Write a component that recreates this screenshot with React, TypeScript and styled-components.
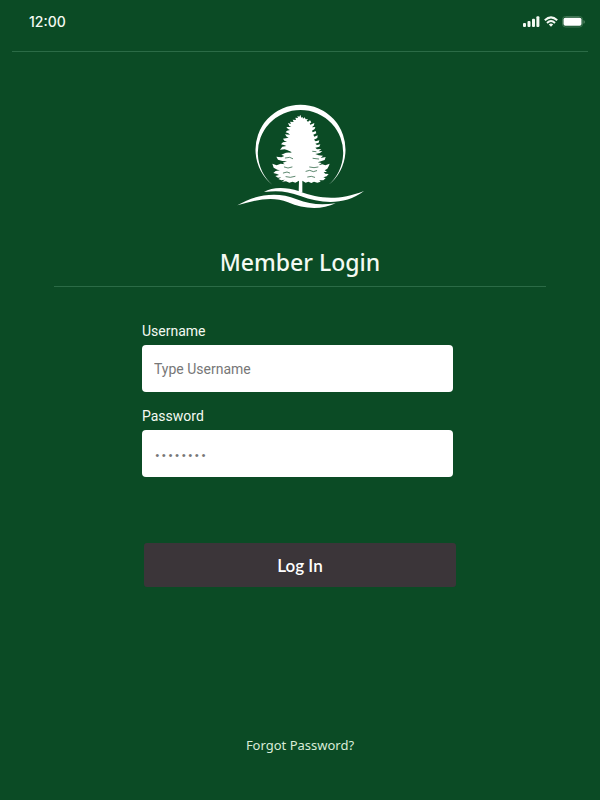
import React from "react";
import styled, { createGlobalStyle } from "styled-components";

const GlobalStyle = createGlobalStyle`
  *, *::before, *::after { box-sizing: border-box; }
  body { margin: 0; background: #0b4b25; }
`;

const Screen = styled.div`
  min-height: 100vh;
  display: flex;
  flex-direction: column;
  align-items: center;
  background: #0b4b25;
  color: #f4faf3;
  font-family: Roboto, "Liberation Sans", sans-serif;
`;

const StatusBar = styled.header`
  align-self: stretch;
  display: flex;
  align-items: center;
  justify-content: space-between;
  height: 52px;
  margin: 0 12px;
  padding: 0 3px 8px 17px;
  border-bottom: 1px solid #2b6b46;
`;

const Clock = styled.time`
  font-family: Inter, sans-serif;
  font-size: 14px;
  line-height: 20px;
  font-weight: 500;
`;

const StatusIcons = styled.div`
  display: flex;
  align-items: center;
  gap: 4px;

  svg { display: block; }
`;

const Logo = styled.svg`
  display: block;
  width: 140px;
  height: 120px;
  margin-top: 43px;
`;

const Title = styled.h1`
  width: 82%;
  margin: 31px 0 0;
  padding-bottom: 8px;
  border-bottom: 1px solid #2b6b46;
  font-family: "Noto Sans", sans-serif;
  font-size: 23px;
  line-height: 32px;
  font-weight: 500;
  text-align: center;
`;

const Form = styled.form`
  width: 52%;
  margin-top: 34px;
  display: flex;
  flex-direction: column;
`;

const Fields = styled.div`
  display: flex;
  flex-direction: column;
  gap: 14px;
  margin: 0 3px 0 -2px;
`;

const Field = styled.div`
  display: flex;
  flex-direction: column;
  gap: 4px;
`;

const Label = styled.label`
  font-size: 14px;
  line-height: 20px;
`;

const TextInput = styled.input`
  width: 100%;
  height: 47px;
  padding: 0 12px;
  border: 0;
  border-radius: 4px;
  background: #fff;
  color: #333;
  font-family: inherit;
  font-size: 14px;

  &::placeholder { color: #777; opacity: 1; }
`;

const PasswordInput = styled(TextInput)`
  &::placeholder { font-family: "Liberation Mono", monospace; font-size: 11px; }
`;

const LoginButton = styled.button`
  height: 44px;
  margin-top: 66px;
  border: 0;
  border-radius: 3px;
  background: #3b3539;
  color: #fff;
  font-family: Lato, sans-serif;
  font-size: 17px;
  font-weight: 600;
  cursor: pointer;
`;

const ForgotLink = styled.a`
  margin-top: auto;
  margin-bottom: 45px;
  color: #d9ecd8;
  font-family: "Noto Sans", sans-serif;
  font-size: 13px;
  line-height: 20px;
  text-decoration: none;
`;

function SignalIcon() {
  return (
    <svg width="17" height="11" viewBox="0 0 17 11" fill="#f4faf3" aria-hidden="true">
      <rect x="0" y="7" width="3" height="4" rx="1" />
      <rect x="4.5" y="5" width="3" height="6" rx="1" />
      <rect x="9" y="2.8" width="3" height="8.2" rx="1" />
      <rect x="13.4" y="0.3" width="3" height="10.7" rx="1" />
    </svg>
  );
}

function WifiIcon() {
  return (
    <svg width="14" height="11" viewBox="0 0 14 11" fill="none" stroke="#f4faf3" strokeWidth="2" aria-hidden="true">
      <path d="M.8 4.3Q7-1.5 13.2 4.3M3 6.9Q7 3.2 11 6.9" />
      <path d="M4.8 8.4Q7 6.5 9.2 8.4L7 10.7Z" fill="#f4faf3" stroke="none" />
    </svg>
  );
}

function BatteryIcon() {
  return (
    <svg width="23" height="12" viewBox="0 0 23 12" aria-hidden="true">
      <rect x=".5" y=".5" width="20" height="10.5" rx="3" fill="none" stroke="#3f7553" />
      <rect x="1.5" y="1.8" width="18" height="8" rx="1.8" fill="#fff" />
      <path d="M21.5 4v3.8q1.3-.5 1.3-1.9T21.5 4Z" fill="#5c896b" />
    </svg>
  );
}

function TreeLogo() {
  return (
    <Logo viewBox="0 0 420 360" fill="#fff" role="img" aria-label="Pine tree emblem">
      <path d="M128 270A135 135 0 1 1 295 270A128 128 0 1 0 128 270Z" />
      <path
        d="M211 59L208 65L202 63L204 69L196 68L198 75L188 74L191 81L180 80L183 87L174 84L178 93L184 96L169 96L174 102L180 105L171 107L167 112L175 115L180 119L165 118L170 125L176 128L159 131L163 137L171 140L159 142L153 148L162 150L169 153L157 155L150 164L164 163L176 167L186 172L168 173L154 179L163 183L154 187L139 185L144 194L157 198L171 199L158 203L164 208L152 206L140 211L127 206L131 218L142 224L150 226L137 228L130 234L141 237L147 240L136 243L144 248L154 247L145 252L154 256L164 254L156 260L168 259L178 263L188 260L196 263L207 257L206 291L217 291L217 257L227 263L235 260L244 264L252 260L262 263L272 260L268 256L280 256L287 250L280 247L290 244L296 237L286 236L281 232L291 230L284 226L292 221L296 214L299 206L286 211L277 208L266 211L275 204L263 202L275 198L284 195L287 186L272 189L279 182L266 181L256 177L270 174L277 168L266 169L274 162L261 163L256 158L268 155L271 148L261 150L256 146L266 143L268 136L257 139L252 134L262 129L263 121L253 125L250 119L259 115L257 108L248 112L246 107L254 102L256 96L246 97L252 91L253 84L241 89L239 86L244 82L240 76L234 80L230 77L234 72L227 73L224 67L219 71L218 66L214 68Z"
      />
      <g fill="none" stroke="#0b4b25" strokeWidth="2" strokeLinecap="round" strokeLinejoin="round">
        <path d="M153 168L169 166L181 172M166 189L179 187L188 191M163 216L174 219L186 216M160 234L171 231L179 234M168 245L181 247L195 244" />
        <path d="M248 169L258 170M249 190L266 192M239 216L252 218L264 216M228 229L239 226L250 230L260 227M233 246L244 244L254 247" />
      </g>
      <path d="M102 291C126 277 163 274 208 289C266 311 323 319 402 288C344 332 274 326 211 303C174 289 145 286 102 291Z" />
      <path d="M22 331C74 301 137 286 200 313C240 329 275 331 317 325C273 346 220 342 174 322C125 302 75 316 22 331Z" />
    </Logo>
  );
}

export default function App() {
  return (
    <>
      <GlobalStyle />
      <Screen>
        <StatusBar>
          <Clock>12:00</Clock>
          <StatusIcons>
            <SignalIcon />
            <WifiIcon />
            <BatteryIcon />
          </StatusIcons>
        </StatusBar>
        <TreeLogo />
        <Title>Member Login</Title>
        <Form onSubmit={(event: React.FormEvent) => event.preventDefault()}>
          <Fields>
            <Field>
              <Label htmlFor="username">Username</Label>
              <TextInput id="username" type="text" autoComplete="username" placeholder="Type Username" />
            </Field>
            <Field>
              <Label htmlFor="password">Password</Label>
              <PasswordInput id="password" type="password" autoComplete="current-password" placeholder="••••••••" />
            </Field>
          </Fields>
          <LoginButton type="submit">Log In</LoginButton>
        </Form>
        <ForgotLink href="#forgot-password">Forgot Password?</ForgotLink>
      </Screen>
    </>
  );
}
